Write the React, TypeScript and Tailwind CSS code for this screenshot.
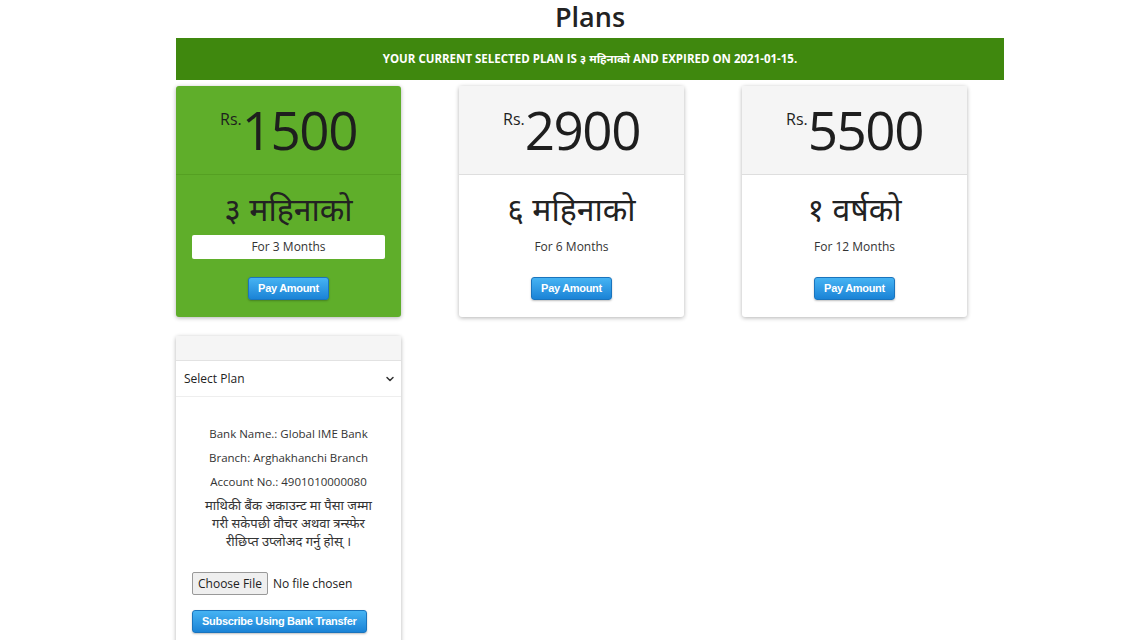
import { ChevronDown } from "lucide-react";

const plans = [
  { price: "2900", nepali: "६ महिनाको", label: "For 6 Months" },
  { price: "5500", nepali: "१ वर्षको", label: "For 12 Months" },
];

function PayButton({ children, className = "" }: { children: React.ReactNode; className?: string }) {
  return (
    <button
      className={
        "h-[23px] rounded-[3px] border border-[#1a74bd] bg-gradient-to-b from-[#45b3f3] to-[#1a83d6] px-[9px] text-[11px] font-bold tracking-[-0.3px] text-white shadow-[0_1px_2px_rgba(0,0,0,0.25)] [font-family:'Liberation_Sans',Arial,sans-serif] " +
        className
      }
    >
      {children}
    </button>
  );
}

function Price({ value }: { value: string }) {
  return (
    <div className="flex items-start justify-center pt-[14px] text-[#1e1e1e]">
      <span className="mt-[11px] text-[16px] font-medium leading-none">Rs.</span>
      <span className="text-[53px] font-medium leading-[60px] tracking-[-1.5px]">{value}</span>
    </div>
  );
}

export default function App() {
  return (
    <div className="min-h-[640px] bg-white [font-family:'Open_Sans','Noto_Sans','Noto_Sans_Devanagari',sans-serif] text-[#333]">
      <div className="ml-[176px] w-[828px]">
        <h1 className="h-[38px] text-center text-[27px] font-semibold leading-[34px] text-[#222]">Plans</h1>
        <div className="flex h-[42px] items-center justify-center bg-[#3f880e] text-[11.5px] font-bold text-white">
          YOUR CURRENT SELECTED PLAN IS ३ महिनाको AND EXPIRED ON 2021-01-15.
        </div>

        <div className="mt-[6px] grid grid-cols-[225px_225px_225px] gap-x-[58px]">
          {/* selected plan */}
          <div className="h-[231px] rounded-[3px] bg-[#5fae2a] shadow-[0_1px_4px_rgba(0,0,0,0.3)]">
            <div className="h-[89px] border-b border-[#55a022]">
              <Price value="1500" />
            </div>
            <div className="flex flex-col items-center px-4">
              <div className="mt-[12px] text-[32px] leading-[44px] text-[#222]">३ महिनाको</div>
              <div className="mt-[4px] flex h-[24px] w-full items-center justify-center rounded-[2px] bg-white text-[12px] text-[#333]">
                For 3 Months
              </div>
              <PayButton className="mt-[18px]">Pay Amount</PayButton>
            </div>
          </div>

          {plans.map((p) => (
            <div key={p.price} className="h-[231px] rounded-[3px] bg-white shadow-[0_1px_4px_rgba(0,0,0,0.3)]">
              <div className="h-[89px] border-b border-[#dedede] bg-[#f5f5f5]">
                <Price value={p.price} />
              </div>
              <div className="flex flex-col items-center px-4">
                <div className="mt-[12px] text-[32px] leading-[44px] text-[#222]">{p.nepali}</div>
                <div className="mt-[4px] flex h-[24px] items-center text-[12px] text-[#333]">{p.label}</div>
                <PayButton className="mt-[18px]">Pay Amount</PayButton>
              </div>
            </div>
          ))}

          {/* bank transfer */}
          <div className="col-start-1 mt-[19px] h-[320px] rounded-[3px] bg-white shadow-[0_1px_4px_rgba(0,0,0,0.3)]">
            <div className="h-[25px] border-b border-[#e2e2e2] bg-[#f5f5f5]" />
            <div className="flex h-[36px] items-center justify-between border-b border-[#eee] pl-[8px] pr-[5px] text-[12px] text-[#222]">
              <span>Select Plan</span>
              <ChevronDown size={12} strokeWidth={3} className="text-[#333]" />
            </div>
            <div className="px-4 pt-[28px]">
              <div className="space-y-[6px] text-center text-[11.5px] leading-[18px] text-[#333]">
                <p>Bank Name.: Global IME Bank</p>
                <p>Branch: Arghakhanchi Branch</p>
                <p>Account No.: 4901010000080</p>
              </div>
              <p className="mt-[5px] px-[6px] text-center text-[13px] leading-[18px] text-[#333]">
                माथिकी बैंक अकाउन्ट मा पैसा जम्मा गरी सकेपछी वौचर अथवा त्रन्स्फेर रीछिप्त उप्लोअद गर्नु होस् ।
              </p>
              <div className="mt-[22px] flex items-center gap-[5px] text-[12px] text-[#222]">
                <span className="flex h-[23px] items-center rounded-[2px] border border-[#999] bg-[#efefef] px-[5px]">Choose File</span>
                <span>No file chosen</span>
              </div>
              <PayButton className="mt-[15px]">Subscribe Using Bank Transfer</PayButton>
            </div>
          </div>
        </div>
      </div>
    </div>
  );
}
